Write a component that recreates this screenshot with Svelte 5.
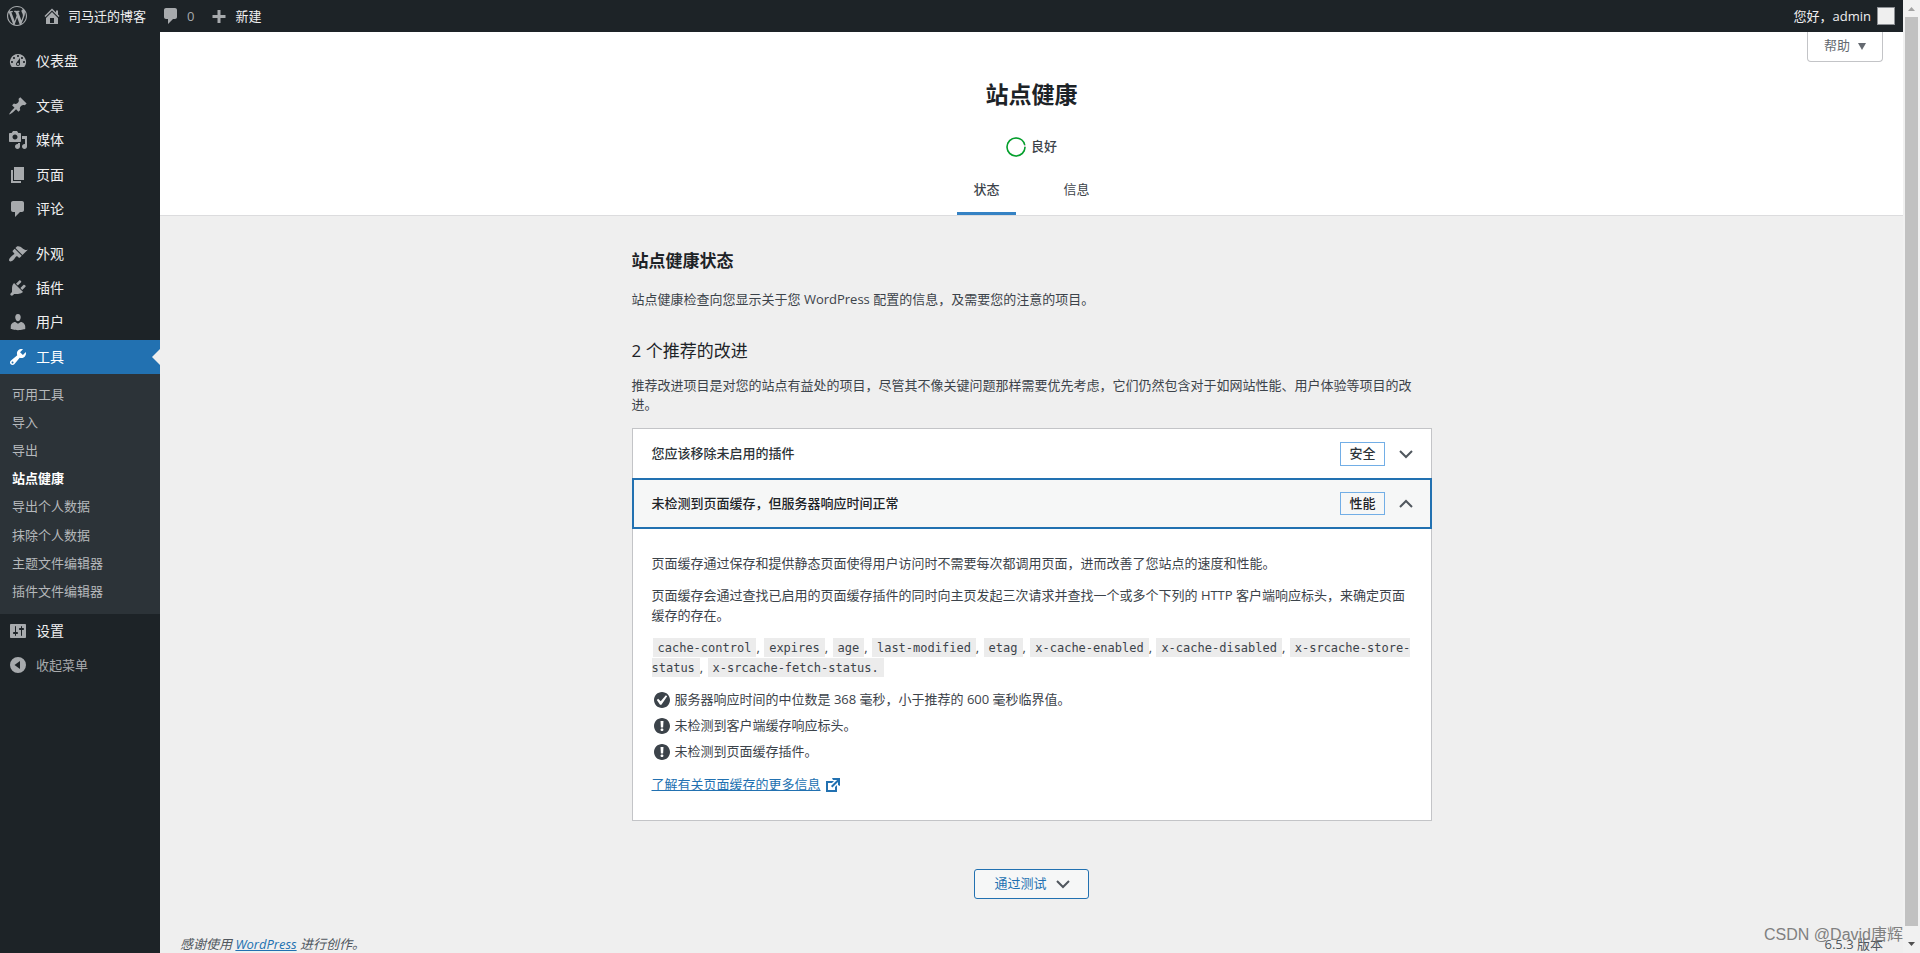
<script>
  const icons = {
    wordpress: 'M20 10c0-5.51-4.49-10-10-10C4.48 0 0 4.49 0 10c0 5.52 4.48 10 10 10 5.51 0 10-4.48 10-10zM7.78 15.37L4.37 6.22c.55-.02 1.17-.08 1.17-.08.5-.06.44-1.13-.06-1.11 0 0-1.45.11-2.37.11-.18 0-.37 0-.58-.01C4.12 2.69 6.87 1.11 10 1.11c2.33 0 4.45.87 6.05 2.34-.68-.11-1.65.39-1.65 1.58 0 .74.45 1.36.9 2.1.35.61.55 1.36.55 2.46 0 1.49-1.4 5-1.4 5l-3.03-8.37c.54-.02.82-.17.82-.17.5-.05.44-1.25-.06-1.22 0 0-1.44.12-2.38.12-.87 0-2.33-.12-2.33-.12-.5-.03-.56 1.2-.06 1.22l.92.08 1.26 3.41zM17.41 10c.24-.64.74-1.87.43-4.25.7 1.29 1.05 2.71 1.05 4.25 0 3.29-1.73 6.24-4.4 7.78.97-2.59 1.94-5.2 2.92-7.78zM6.1 18.09C3.12 16.65 1.11 13.53 1.11 10c0-1.3.23-2.48.72-3.59C3.25 10.3 4.67 14.2 6.1 18.09zm4.03-6.63l2.58 6.98c-.86.29-1.76.45-2.71.45-.79 0-1.57-.11-2.29-.33.81-2.38 1.62-4.74 2.42-7.1z',
    home: 'M16 8.5l1.53 1.53-1.06 1.06L10 4.6l-6.47 6.49-1.06-1.06L10 2.5l4 4v-2h2v4zm-6-2.46l6 5.99V18H4v-5.97zM12 17v-5H8v5h4z',
    comment: 'M5 2h9c1.1 0 2 .9 2 2v7c0 1.1-.9 2-2 2h-2l-5 5v-5H5c-1.1 0-2-.9-2-2V4c0-1.1.9-2 2-2z',
    plus: 'M16.5 9v3h-5v5h-3v-5h-5V9h5V4h3v5z',
    dashboard: 'M3.76 16h12.48A7.998 7.998 0 0 0 10 3a7.998 7.998 0 0 0-6.24 13zM10 4c.55 0 1 .45 1 1s-.45 1-1 1-1-.45-1-1 .45-1 1-1zM6 6c.55 0 1 .45 1 1s-.45 1-1 1-1-.45-1-1 .45-1 1-1zm8 0c.55 0 1 .45 1 1s-.45 1-1 1-1-.45-1-1 .45-1 1-1zm-5.37 5.55L12 7v6c0 1.1-.9 2-2 2s-2-.9-2-2c0-.57.24-1.08.63-1.45zM4 10c.55 0 1 .45 1 1s-.45 1-1 1-1-.45-1-1 .45-1 1-1zm12 0c.55 0 1 .45 1 1s-.45 1-1 1-1-.45-1-1 .45-1 1-1zm-5 3c0-.55-.45-1-1-1s-1 .45-1 1 .45 1 1 1 1-.45 1-1z',
    pin: 'M10.44 3.02l1.82-1.82 6.36 6.35-1.83 1.82c-1.05-.68-2.48-.57-3.41.36l-.75.75c-.92.93-1.04 2.35-.35 3.41l-1.83 1.82-2.41-2.41-2.8 2.79c-.42.42-3.38 2.71-3.8 2.29s1.86-3.39 2.28-3.81l2.79-2.79L4.1 9.36l1.83-1.82c1.05.69 2.48.57 3.4-.36l.75-.75c.93-.92 1.05-2.35.36-3.41z',
    media: 'M13 11V4c0-.55-.45-1-1-1h-1.67L9 1H5L3.67 3H2c-.55 0-1 .45-1 1v7c0 .55.45 1 1 1h10c.55 0 1-.45 1-1zM7 4.5c1.38 0 2.5 1.12 2.5 2.5S8.38 9.5 7 9.5 4.5 8.38 4.5 7 5.62 4.5 7 4.5zM14 6h5v10.5c0 1.38-1.12 2.5-2.5 2.5S14 17.88 14 16.5s1.12-2.5 2.5-2.5c.17 0 .34.02.5.05V9h-3V6zm-4 8.05V13h2v3.5c0 1.38-1.12 2.5-2.5 2.5S7 17.88 7 16.5 8.12 14 9.5 14c.17 0 .34.02.5.05z',
    page: 'M6 15V2h10v13H6zm-1 1h8v2H3V5h2v11z',
    brush: 'M14.48 11.06L7.41 3.99l1.5-1.5c.5-.56 2.3-.47 3.51.32 1.21.8 1.43 1.28 2.91 2.1 1.18.64 2.45 1.26 4.45.85zm-.71.71L6.7 4.7 4.93 6.47c-.39.39-.39 1.02 0 1.41l1.06 1.06c.39.39.39 1.03 0 1.42-.6.6-1.43 1.11-2.21 1.69-.35.26-.7.53-1.01.84C1.43 14.23.4 16.08 1.4 17.07c.99 1 2.84-.03 4.18-1.36.31-.31.58-.66.85-1.02.57-.78 1.08-1.61 1.69-2.21.39-.39 1.02-.39 1.41 0l1.06 1.06c.39.39 1.02.39 1.41 0z',
    plug: 'M13.11 4.36L9.87 7.6 8 5.73l3.24-3.24c.35-.34 1.05-.2 1.56.32.52.51.66 1.21.31 1.55zm-8 1.77l.91-1.12 9.01 9.01-1.19.84c-.71.71-2.63 1.16-3.82 1.16H6.14L4.9 17.26c-.59.59-1.54.59-2.12 0-.59-.58-.59-1.53 0-2.12l1.24-1.24v-3.88c0-1.13.4-3.19 1.09-3.89zm7.26 3.97l3.24-3.24c.34-.35 1.04-.21 1.55.31.52.51.66 1.21.31 1.55l-3.24 3.25z',
    user: 'M10 9.25c-2.27 0-2.73-3.44-2.73-3.44C7 4.02 7.82 2 9.97 2c2.16 0 2.98 2.02 2.71 3.81 0 0-.41 3.44-2.68 3.44zm0 2.57L12.72 10c2.39 0 4.52 2.33 4.52 4.53v2.49s-3.65 1.13-7.24 1.13c-3.65 0-7.24-1.13-7.24-1.13v-2.49c0-2.25 1.94-4.48 4.47-4.48z',
    wrench: 'M16.68 9.77c-1.34 1.34-3.3 1.67-4.95.99l-5.41 6.52c-.99.99-2.59.99-3.58 0s-.99-2.59 0-3.57l6.52-5.42c-.68-1.65-.35-3.61.99-4.95 1.28-1.28 3.12-1.62 4.72-1.06l-2.89 2.89 2.82 2.82 2.86-2.87c.53 1.58.18 3.39-1.08 4.65zM3.81 16.21c.4.39 1.04.39 1.43 0 .4-.4.4-1.04 0-1.43-.39-.4-1.03-.4-1.43 0-.39.39-.39 1.03 0 1.43z',
    settings: 'M18 16V4c0-.55-.45-1-1-1H3c-.55 0-1 .45-1 1v12c0 .55.45 1 1 1h14c.55 0 1-.45 1-1zM8 11h1c.55 0 1 .45 1 1s-.45 1-1 1H8v1.5c0 .28-.22.5-.5.5s-.5-.22-.5-.5V13H6c-.55 0-1-.45-1-1s.45-1 1-1h1V5.5c0-.28.22-.5.5-.5s.5.22.5.5V11zm5-2h-1c-.55 0-1-.45-1-1s.45-1 1-1h1V5.5c0-.28.22-.5.5-.5s.5.22.5.5V7h1c.55 0 1 .45 1 1s-.45 1-1 1h-1v5.5c0 .28-.22.5-.5.5s-.5-.22-.5-.5V9z',
    collapse: 'M10 2a8 8 0 1 0 0 16 8 8 0 0 0 0-16zm2 12l-5.5-4L12 6z',
    yes: 'M10 2c-4.42 0-8 3.58-8 8s3.58 8 8 8 8-3.58 8-8-3.58-8-8-8zm-.615 12.66h-1.34l-3.24-4.54 1.341-1.25 2.569 2.4 5.141-5.931 1.34.94z',
    warning: 'M10 2c4.42 0 8 3.58 8 8s-3.58 8-8 8-8-3.58-8-8 3.58-8 8-8zm1.13 9.38l.35-6.46H8.52l.35 6.46h2.26zm-.09 3.36c.24-.23.37-.55.37-.96 0-.42-.12-.74-.36-.97s-.59-.35-1.06-.35-.82.12-1.07.35-.37.55-.37.97c0 .41.13.73.38.96.26.23.61.34 1.06.34s.8-.11 1.05-.34z',
    external: 'M9 3h8v8l-2-1V6.92l-5.6 5.59-1.41-1.41L14.08 5H10zm3 12v-3l2-2v7H3V6h8L9 8H5v7h7z'
  };

  const tools = ['可用工具', '导入', '导出', '站点健康', '导出个人数据', '抹除个人数据', '主题文件编辑器', '插件文件编辑器'];
  const menu = [
    { label: '仪表盘', icon: 'dashboard' },
    { label: '文章', icon: 'pin', gap: true },
    { label: '媒体', icon: 'media' },
    { label: '页面', icon: 'page' },
    { label: '评论', icon: 'comment' },
    { label: '外观', icon: 'brush', gap: true },
    { label: '插件', icon: 'plug' },
    { label: '用户', icon: 'user' },
    { label: '工具', icon: 'wrench', children: tools },
    { label: '设置', icon: 'settings' }
  ];

  const headers = ['cache-control', 'expires', 'age', 'last-modified', 'etag', 'x-cache-enabled', 'x-cache-disabled', 'x-srcache-store-status', 'x-srcache-fetch-status.'];
  const results = [
    { icon: 'yes', text: '服务器响应时间的中位数是 368 毫秒，小于推荐的 600 毫秒临界值。' },
    { icon: 'warning', text: '未检测到客户端缓存响应标头。' },
    { icon: 'warning', text: '未检测到页面缓存插件。' }
  ];

  let firstOpen = $state(false);
  let cacheOpen = $state(true);
</script>

{#snippet icon(name)}
  <svg class="icon" viewBox="0 0 20 20" aria-hidden="true"><path fill-rule="evenodd" d={icons[name]} /></svg>
{/snippet}

{#snippet chevron(up)}
  <svg class="chevron" viewBox="0 0 14 10" aria-hidden="true">
    <path d={up ? 'M1 8l6-6 6 6' : 'M1 2l6 6 6-6'} />
  </svg>
{/snippet}

<div class="window">
  <div class="page">
    <header class="adminbar">
      <a class="logo" href="#about" aria-label="WordPress">{@render icon('wordpress')}</a>
      <a class="site" href="#site">{@render icon('home')}<span>司马迁的博客</span></a>
      <a class="count" href="#comments">{@render icon('comment')}<span>0</span></a>
      <a class="new" href="#new">{@render icon('plus')}<span>新建</span></a>
      <a class="account" href="#profile"><span>您好，admin</span><i class="avatar"></i></a>
    </header>

    <div class="body">
      <nav class="sidebar">
        <ul>
          {#each menu as item}
            <li class:gap={item.gap} class:current={item.children}>
              <a class="item" href="#{item.icon}">{@render icon(item.icon)}<span>{item.label}</span></a>
              {#if item.children}
                <ul class="submenu">
                  {#each item.children as child}
                    <li><a class:active={child === '站点健康'} href="#{child}">{child}</a></li>
                  {/each}
                </ul>
              {/if}
            </li>
          {/each}
          <li><button class="item collapse" type="button">{@render icon('collapse')}<span>收起菜单</span></button></li>
        </ul>
      </nav>

      <main>
        <div class="health-header">
          <button class="help" type="button"><span>帮助</span><svg viewBox="0 0 8 7" aria-hidden="true"><path d="M0 0h8L4 7z" /></svg></button>
          <h1>站点健康</h1>
          <div class="progress">
            <svg viewBox="0 0 20 20" aria-hidden="true">
              <circle cx="10" cy="10" r="9" stroke="#c3c4c7" />
              <circle cx="10" cy="10" r="9" stroke="#00a32a" stroke-dasharray="54 57" />
            </svg>
            <span>良好</span>
          </div>
          <nav class="tabs">
            <a class="active" href="#status">状态</a>
            <a href="#info">信息</a>
          </nav>
        </div>

        <section class="content">
          <h2>站点健康状态</h2>
          <p>站点健康检查向您显示关于您 WordPress 配置的信息，及需要您的注意的项目。</p>
          <h3>2 个推荐的改进</h3>
          <p>推荐改进项目是对您的站点有益处的项目，尽管其不像关键问题那样需要优先考虑，它们仍然包含对于如网站性能、用户体验等项目的改进。</p>

          <div class="accordion">
            <button class="row" type="button" aria-expanded={firstOpen} onclick={() => (firstOpen = !firstOpen)}>
              <span class="title">您应该移除未启用的插件</span>
              <span class="badge">安全</span>
              {@render chevron(firstOpen)}
            </button>
            <button class="row focused" type="button" aria-expanded={cacheOpen} onclick={() => (cacheOpen = !cacheOpen)}>
              <span class="title">未检测到页面缓存，但服务器响应时间正常</span>
              <span class="badge">性能</span>
              {@render chevron(cacheOpen)}
            </button>
            {#if cacheOpen}
              <div class="panel">
                <p>页面缓存通过保存和提供静态页面使得用户访问时不需要每次都调用页面，进而改善了您站点的速度和性能。</p>
                <p>页面缓存会通过查找已启用的页面缓存插件的同时向主页发起三次请求并查找一个或多个下列的 HTTP 客户端响应标头，来确定页面缓存的存在。</p>
                <p>{#each headers as name, i}{#if i}{', '}{/if}<code>{name}</code>{/each}</p>
                <ul>
                  {#each results as r}
                    <li>{@render icon(r.icon)}<span>{r.text}</span></li>
                  {/each}
                </ul>
                <a class="more" href="#more"><span>了解有关页面缓存的更多信息</span>{@render icon('external')}</a>
              </div>
            {/if}
          </div>

          <button class="passed" type="button"><span>通过测试</span>{@render chevron(false)}</button>
        </section>

        <footer>
          <em>感谢使用 <a href="#wp">WordPress</a> 进行创作。</em>
          <span>6.5.3 版本</span>
        </footer>
      </main>
    </div>
    <div class="watermark">CSDN @David唐辉</div>
  </div>

  <div class="scrollbar" aria-hidden="true">
    <svg viewBox="0 0 17 17"><path d="M5 11h7L8.500 7z" fill="#a3a3a3" /></svg>
    <i></i>
    <svg viewBox="0 0 17 17"><path d="M5 6h7L8.500 10z" fill="#505050" /></svg>
  </div>
</div>

<style>
  :global(body) {
    margin: 0;
    background: #f0f0f1;
  }

  .window {
    display: grid;
    grid-template-columns: minmax(0, 1fr) 17px;
    min-height: 100vh;
    background: #efefef;
    color: #3c434a;
    font-family: 'Open Sans', 'Noto Sans CJK SC', sans-serif;
    font-size: 13px;
    line-height: 1.5;
  }

  .window *,
  .window *::after {
    box-sizing: border-box;
  }

  .page {
    position: relative;
    display: flex;
    flex-direction: column;
  }

  ul {
    list-style: none;
    margin: 0;
    padding: 0;
  }

  button {
    font: inherit;
    color: inherit;
    border: 0;
    background: none;
    cursor: pointer;
    text-align: left;
  }

  .icon {
    width: 20px;
    height: 20px;
    flex: none;
    fill: currentColor;
  }

  .chevron {
    width: 14px;
    height: 10px;
    flex: none;
    fill: none;
    stroke: #50575e;
    stroke-width: 2;
  }

  .adminbar {
    display: flex;
    height: 32px;
    padding: 0 8px 0 7px;
    background: #1d2327;
    line-height: 32px;
  }

  .adminbar a {
    display: flex;
    align-items: center;
    gap: 6px;
    color: #f0f0f1;
    text-decoration: none;
  }

  .adminbar .icon {
    color: #a7aaad;
  }

  .site {
    margin-left: 15px;
  }

  .adminbar .count {
    margin-left: 15px;
    color: #a7aaad;
  }

  .new {
    margin-left: 15px;
  }

  .adminbar .account {
    margin-left: auto;
  }

  .avatar {
    width: 18px;
    height: 18px;
    border: 1px solid #8c8f94;
    background: #efefef;
  }

  .body {
    flex: 1;
    display: grid;
    grid-template-columns: 160px minmax(0, 1fr);
  }

  .sidebar {
    padding-top: 12px;
    background: #1d2327;
  }

  .gap {
    margin-top: 11px;
  }

  .item {
    position: relative;
    display: flex;
    align-items: center;
    gap: 8px;
    width: 100%;
    padding: 8px;
    color: #f0f0f1;
    font-size: 14px;
    line-height: 1.3;
    text-decoration: none;
  }

  .item .icon {
    color: #a7aaad;
    margin: -1px 0;
  }

  .item.collapse {
    color: #a7aaad;
    font-size: 13px;
    line-height: 18px;
  }

  .current > .item {
    background: #2271b1;
    color: #fff;
  }

  .current > .item .icon {
    color: #fff;
  }

  .current > .item::after {
    content: '';
    position: absolute;
    right: 0;
    top: 50%;
    margin-top: -8px;
    border: 8px solid transparent;
    border-left-width: 0;
    border-right-color: #efefef;
  }

  .submenu {
    padding: 6px 0 9px;
    background: #2c3338;
  }

  .submenu a {
    display: block;
    padding: 5px 12px;
    color: #b5b8bb;
    line-height: 1.4;
    text-decoration: none;
  }

  .submenu .active {
    color: #fff;
    font-weight: 600;
  }

  main {
    display: flex;
    flex-direction: column;
  }

  .health-header {
    position: relative;
    display: flex;
    flex-direction: column;
    align-items: center;
    background: #fff;
    border-bottom: 1px solid #dcdcde;
  }

  .help {
    position: absolute;
    top: 0;
    right: 20px;
    display: flex;
    align-items: center;
    gap: 8px;
    height: 30px;
    padding: 0 16px 1px;
    border: 1px solid #c3c4c7;
    border-top: 0;
    border-radius: 0 0 4px 4px;
    background: #fff;
    color: #646970;
  }

  .help svg {
    width: 8px;
    height: 7px;
    fill: #646970;
  }

  h1 {
    margin: 47px 0 0;
    color: #1d2327;
    font-size: 23px;
    line-height: 30px;
    font-weight: 600;
  }

  .progress {
    display: flex;
    align-items: center;
    gap: 5px;
    margin-top: 28px;
    font-weight: 500;
  }

  .progress svg {
    width: 20px;
    height: 20px;
    fill: none;
    stroke-width: 1.500;
  }

  .tabs {
    display: grid;
    grid-template-columns: 1fr 1fr;
    gap: 32px;
    margin-top: 16px;
  }

  .tabs a {
    padding: 7px 16px 17px;
    color: inherit;
    line-height: 18px;
    text-decoration: none;
  }

  .tabs .active {
    box-shadow: inset 0 -3px #3582c4;
    font-weight: 500;
  }

  .content {
    display: flex;
    flex-direction: column;
    width: 100%;
    max-width: 800px;
    margin: 0 auto;
  }

  h2,
  h3 {
    margin: 33px 0 0;
    color: #1d2327;
    font-size: 17px;
    line-height: 24px;
  }

  h2 {
    font-weight: 600;
  }

  h3 {
    margin-top: 29px;
    font-weight: 400;
  }

  .content p {
    margin: 0;
  }

  h2 + p {
    padding-top: 17px;
  }

  h3 + p {
    padding-top: 13px;
  }

  .accordion {
    margin-top: 13px;
    border: 1px solid #c3c4c7;
    background: #fff;
  }

  .row {
    display: flex;
    align-items: center;
    width: 100%;
    height: 50px;
    padding: 1px 18px 0 19px;
    color: #2c3338;
    font-weight: 500;
  }

  .row.focused {
    width: calc(100% + 2px);
    height: 51px;
    margin: -1px -1px 0;
    padding: 1px 17px 0 18px;
    border: 2px solid #2271b1;
    background: #f6f7f7;
    color: #1d2327;
  }

  .title {
    flex: 1;
  }

  .badge {
    margin-right: 14px;
    padding: 1px 8px;
    border: 1px solid #72aee6;
    font-weight: 500;
  }

  .panel {
    padding: 25px 14px 25px 19px;
  }

  .content .panel p {
    margin-bottom: 13px;
  }

  code {
    margin-left: 1px;
    padding: 3px 5px 2px;
    background: #ececec;
    font-family: 'DejaVu Sans Mono', monospace;
    font-size: 12px;
    line-height: 1;
  }

  .panel ul {
    display: flex;
    flex-direction: column;
    gap: 6px;
  }

  .panel li {
    display: flex;
    align-items: center;
    gap: 3px;
    height: 20px;
  }

  .more {
    display: inline-flex;
    align-items: center;
    gap: 2px;
    margin-top: 13px;
    color: #2271b1;
  }

  .passed {
    display: flex;
    align-items: center;
    align-self: center;
    gap: 9px;
    height: 30px;
    margin-top: 48px;
    padding: 0 18px 0 19px;
    border: 1px solid #2271b1;
    border-radius: 3px;
    background: #f6f7f7;
    color: #2271b1;
  }

  footer {
    display: flex;
    justify-content: space-between;
    margin-top: auto;
    padding: 0 20px;
    color: #50575e;
    line-height: 18px;
  }

  footer a {
    color: #2271b1;
  }

  .watermark {
    position: absolute;
    right: 0;
    bottom: 4px;
    color: #808080;
    font-family: 'Liberation Sans', 'Noto Sans CJK SC', sans-serif;
    font-size: 16px;
    line-height: 28px;
  }

  .scrollbar {
    display: flex;
    flex-direction: column;
    background: #f1f1f1;
  }

  .scrollbar svg {
    width: 17px;
    height: 17px;
  }

  .scrollbar i {
    flex: 1;
    margin: 0 2px 10px;
    background: #c1c1c1;
  }
</style>
